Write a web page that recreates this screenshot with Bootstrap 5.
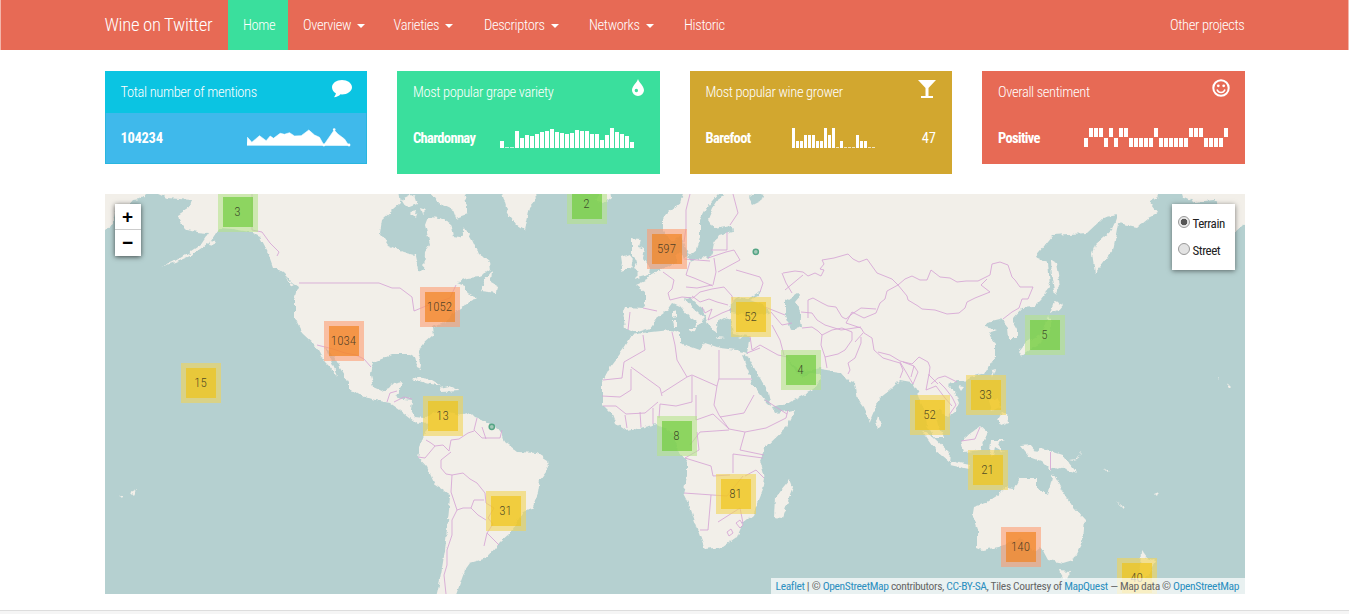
<!DOCTYPE html>
<html lang="en">
<head>
<meta charset="utf-8">
<title>Wine on Twitter</title>
<link href="https://cdn.jsdelivr.net/npm/bootstrap@5.3.0/dist/css/bootstrap.min.css" rel="stylesheet">
<style>
body{font:300 14.5px/21px "Roboto Condensed","Liberation Sans Narrow",Roboto,sans-serif;letter-spacing:-.36px;color:#333;overflow:hidden;background:#fff}
.container,.container>.row{--bs-gutter-x:30px}
.container{max-width:1170px}
.topbar{height:50px;background:#e76a55;border:solid #f3b5aa;border-width:0 1px;--bs-navbar-padding-y:0}
.topbar .navbar-brand{font-size:18.8px;line-height:50px;padding:0;margin:0;width:123.5px;color:#fff;white-space:nowrap}
.topbar .nav-link{line-height:51px;height:50px;padding:0 15px!important;color:#fff!important;white-space:nowrap;font-weight:300}
.topbar .nav-link.active{background:#3adf9d}
.topbar .dropdown-toggle::after{border-top-width:4px;border-left-width:4px;border-right-width:4px;margin-left:6px;vertical-align:2px}
.topbar .nav-link.last{padding-right:0!important}
.tile{color:#fff;border-radius:0;border:0;height:93px}
.tile.tall{height:103px}
.tile .card-header{height:42px;padding:11px 15px 0 16px;background:none;border:0;border-radius:0!important}
.tile .card-body{padding:15px 16px 0 16px;font-weight:bold}
.tile .card-body span{letter-spacing:-.65px;line-height:22px}
.tile svg{display:block}
.c-blue{background:#3fb9eb;box-shadow:inset 0 0 0 1px #29b6df}
.c-blue .card-header{background:#0bc4e2}
.c-green{background:#3adf9d}.c-gold{background:#d2a72f}.c-red{background:#e76a55}
.map{height:400px;background:#b5d0d0;margin-top:20px;overflow:hidden}
.map>svg{display:block}
.cluster{position:absolute;width:40px;height:40px;padding:5px;font-size:13px;line-height:30px;text-align:center;color:rgba(45,45,30,.82);letter-spacing:0}
.cluster b{display:block;font-weight:300}
.sm{background:rgba(181,226,140,.6)}.sm b{background:rgba(110,204,57,.68)}
.md{background:rgba(241,211,87,.6)}.md b{background:rgba(240,194,12,.62)}
.lg{background:rgba(253,156,115,.6)}.lg b{background:rgba(241,128,23,.65)}
.zoomer{position:absolute;left:10px;top:10px;width:26px;background:#fff;box-shadow:0 1px 5px rgba(0,0,0,.65);font:bold 19px/26px "Liberation Sans",sans-serif;letter-spacing:0;color:#000;text-align:center}
.zoomer span{display:block;height:26px}
.layers{position:absolute;right:10px;top:10px;width:63px;height:66px;background:#fff;box-shadow:0 1px 5px rgba(0,0,0,.5);padding:6px;font-size:13px;font-weight:400;letter-spacing:-.45px;color:#222}
.layers label{display:flex;align-items:center;height:27px;gap:3px}
.dotr{width:12px;height:12px;flex:none;border:1px solid #999;border-radius:50%;background:#e3e3e3;margin-top:-4px}
.dotr.on{background:radial-gradient(circle,#555 0 3px,#e8e8e8 3.6px)}
.credit{position:absolute;right:0;bottom:0;width:474px;height:16px;background:rgba(255,255,255,.7);padding-left:5px;font-size:11.5px;font-weight:400;line-height:17px;letter-spacing:-.34px;white-space:nowrap;color:#666}
.credit a{color:#2b8fc0;text-decoration:none}
.foot{height:4px;margin-top:16px;background:#f5f5f5;border-top:1px solid #ddd}
</style>
</head>
<body>
<nav class="navbar navbar-expand topbar">
 <div class="container align-items-stretch">
  <a class="navbar-brand" href="#">Wine on Twitter</a>
  <ul class="navbar-nav me-auto">
   <li style="width:60px"><a class="nav-link active" href="#">Home</a></li>
   <li style="width:90.5px"><a class="nav-link dropdown-toggle" href="#">Overview</a></li>
   <li style="width:90.5px"><a class="nav-link dropdown-toggle" href="#">Varieties</a></li>
   <li style="width:105px"><a class="nav-link dropdown-toggle" href="#">Descriptors</a></li>
   <li style="width:95px"><a class="nav-link dropdown-toggle" href="#">Networks</a></li>
   <li><a class="nav-link" href="#">Historic</a></li>
  </ul>
  <a class="nav-link last" href="#">Other projects</a>
 </div>
</nav>
<main class="container" style="padding-top:21px">
 <div class="row align-items-start" style="height:103px">
  <div class="col-3"><div class="card tile c-blue">
   <div class="card-header d-flex justify-content-between"><span>Total number of mentions</span>
    <svg width="20" height="18" viewBox="0 0 20 18" style="margin-top:-2px"><path fill="#fff" d="M10 0c5.500 0 10 3.200 10 7.200s-4.500 7.200-10 7.200l-1.500-.1C7 16 4.500 17.200 2.200 17.300c-.3-.5 1.500-1.500 1.700-4C1.500 12 0 9.700 0 7.200 0 3.200 4.500 0 10 0z"/></svg></div>
   <div class="card-body d-flex justify-content-between"><span style="letter-spacing:-.3px">104234</span>
    <svg width="104" height="20" viewBox="247.500 128 104 20"><path fill="#fff" stroke="#fff" stroke-width=".6" d="M248 137.300l4.300 5 7.700-6.600 6.700 5 4-4.700 3.300 2.300 6.700-5 4.300 1 5-1.600 5 3.300 6.700-.300 7.600-5.700 5.700 5 5 2.300 4.300 7.700 10.400-15 3.600 4 6.700 5 4.300 6.500-102-.2z"/><circle cx="334.700" cy="129.500" r="1.300" fill="#fff"/><circle cx="324.400" cy="145" r="1.400" fill="#fff"/><circle cx="349.500" cy="145" r="1.400" fill="#fff"/></svg></div>
  </div></div>
  <div class="col-3"><div class="card tile tall c-green">
   <div class="card-header d-flex justify-content-between"><span>Most popular grape variety</span>
    <svg width="12" height="17" viewBox="0 0 12 17" style="margin:-3px 1px 0 0"><path fill="#fff" fill-rule="evenodd" d="M6 0C6.900 3.500 12 7 12 11.200A5.800 5.600 0 0 1 0 11.200C0 7 5.100 3.500 6 0zM4.300 9.800a1.700 1.700 0 1 0 .1 3.400 1.700 1.700 0 0 0-.1-3.400z"/></svg></div>
   <div class="card-body d-flex justify-content-between"><span>Chardonnay</span>
    <svg width="143.500" height="20" fill="#fff" data-bars="7,.7,.7,17,10,13,12,14,16,17,19,16,15,14,15,18,17,17,14,14,8,13,20,16,14,12,6" data-w="4"></svg></div>
  </div></div>
  <div class="col-3"><div class="card tile tall c-gold">
   <div class="card-header d-flex justify-content-between"><span>Most popular wine grower</span>
    <svg width="18" height="18" viewBox="0 0 18 18" style="margin:-2px 1px 0 0"><path fill="#fff" d="M0 0h18l-7.500 8v8H15v2H3v-2h4.500V8z"/></svg></div>
   <div class="card-body d-flex"><span style="width:86.500px">Barefoot</span>
    <svg width="86" height="20" fill="#fff" data-bars="20,7,7,13,13,13,7,7,20,13,20,.7,7,.7,.7,.7,13,7,7,.7,.7" data-w="3"></svg><span class="ms-auto fw-normal" style="letter-spacing:0">47</span></div>
  </div></div>
  <div class="col-3"><div class="card tile c-red">
   <div class="card-header d-flex justify-content-between"><span>Overall sentiment</span>
    <svg width="18" height="18" viewBox="0 0 18 18" style="margin-top:-3px"><g fill="none" stroke="#fff" stroke-width="2"><circle cx="9" cy="9" r="7.700"/><path d="M5 10.500q1.200 3 4 3t4-3" stroke-width="1.600"/></g><g fill="#fff"><circle cx="6.300" cy="6.800" r="1.400"/><circle cx="11.700" cy="6.800" r="1.400"/></g></svg></div>
   <div class="card-body d-flex justify-content-between"><span>Positive</span>
    <svg width="144.500" height="20" fill="#fff" data-tri="duuududuudddddudddddduuuddddu"></svg></div>
  </div></div>
 </div>
 <section class="map position-relative">
 <svg width="1140" height="400" viewBox="105 194 1140 400">
  <defs><filter id="coast" x="0" y="0" width="1" height="1" filterUnits="objectBoundingBox" color-interpolation-filters="sRGB"><feTurbulence type="fractalNoise" baseFrequency=".16" numOctaves="3" seed="4"/><feDisplacementMap in="SourceGraphic" scale="5" xChannelSelector="R" yChannelSelector="G"/></filter></defs>
  <g filter="url(#coast)">
  <rect x="95" y="184" width="1160" height="420" fill="#b5d0d0"/>
  <g fill="#f2efe9">
   <path d="M95 184H150L148 194L140 199L133 200L128 206L115 212L112 226L108 229L95 232z"/>
   <path d="M157 184L158 194L167 198L192 200L190 207L178 215L180 223L187 230L197 232L208 233L200 245L188 253L172 262L160 267L176 262L190 256L203 247L212 240L220 228L232 229L250 232L260 237L267 250L273 267L283 273L292 282L299 287L295 300L295 318L303 334L315 345L318 350L325 362L330 367L337 377L335 370L327 352L325 347L333 355L340 367L349 382L349 388L360 395L375 400L390 403L400 410L410 418L418 424L424 421L429 425L432 420L424 418L415 417L411 410L412 400L396 398L399 392L402 382L393 384L390 388L382 391L373 387L370 375L372 363L384 358L393 354L410 354L415 357L417 367L421 369L422 365L418 353L422 345L433 335L432 327L445 323L457 310L466 304L477 297L465 292L465 285L457 282L467 278L480 277L490 270L489 262L478 253L472 240L465 228L460 238L453 237L450 223L440 218L428 217L425 225L430 245L425 253L424 271L418 270L415 255L403 252L388 245L380 233L382 220L393 210L401 203L398 184z"/>
   <path d="M424 184H462L467 206L467 214L456 218L453 210L438 203L434 197zM402 200l12-6 3 10-10 4zM410 212l7-1-2 6zM420 208l6 2-4 4z"/>
   <path d="M500 184L505 203L508 213L517 225L525 230L527 222L530 207L536 200L534 184z"/>
   <path d="M492 271L485 280L480 291L497 293L498 286L491 282zM462 303l14-6-3 4-10 5zM602 184H610L612 197L604 203L596 202z"/>
   <path d="M411 379q10-5 20 1l10 6-11-2zM440 388l9-2 11 5-18 1z"/>
   <path d="M632 238l8 1-2 8 7 2-2 9 7 10-1 7-16 4 7-7-7-4 4-7-5-5zM621 257l8-3 4 5-2 9-11 4 2-8z"/>
   <path d="M686 184L680 203L668 212L663 218L663 232L672 241L681 236L689 256L684 258L680 252L676 256L677 263L668 266L659 270L650 275L647 280L636 285L645 292L645 305L643 308L625 307L623 312L625 328L633 332L638 332L650 328L657 318L668 310L673 303L680 306L690 317L697 322L694 330L700 323L705 318L690 305L685 299L690 298L703 310L709 326L718 333L717 322L724 318L731 320L733 333L748 336L750 336L747 353L737 350L720 348L705 343L700 350L680 343L680 332L670 330L643 333L632 335L623 350L610 367L602 382L602 405L612 415L615 423L627 431L640 428L657 424L668 430L677 437L675 447L680 452L687 462L687 477L683 493L690 507L697 527L705 549L723 547L737 537L743 523L753 515L763 490L765 478L760 460L765 448L787 427L795 410L775 413L772 407L790 402L812 391L821 378L820 369L840 372L847 380L855 383L858 400L863 407L870 422L875 410L880 398L890 390L900 380L911 382L917 392L920 400L925 410L927 425L935 438L945 438L938 425L935 412L940 410L948 417L955 412L959 402L955 392L948 385L957 381L965 382L970 377L985 373L990 365L995 357L995 343L988 333L997 330L985 327L987 322L1000 319L1004 323L1008 328L1009 338L1017 338L1017 330L1013 323L1013 318L1022 308L1033 307L1040 300L1050 287L1048 262L1035 257L1053 235L1087 233L1103 218L1117 215L1112 230L1095 245L1092 253L1095 273L1100 267L1113 250L1115 240L1118 223L1137 227L1148 218L1158 213L1150 202L1157 198L1162 184z"/>
   <path d="M1180 184L1184 197L1195 202L1214 200L1230 213L1235 232L1243 225L1255 222V184zM1051 260l5 3 4 24-5 8-3-16zM1054 301l9 4-4 5-9 3zM1048 316l4 8-4 14-14 9-12 9-3-5 7-9 14-7z"/>
   <path d="M423 420L428 425L422 440L418 457L427 467L435 485L450 495L449 510L445 550L440 580L434 606H452L465 570L470 563L487 558L500 542L510 533L523 512L532 508L538 493L540 480L549 468L548 460L537 453L518 452L505 442L502 432L487 422L475 418L470 413L463 415L440 410z"/>
   <path d="M973 507L972 513L977 530L977 548L982 550L1000 547L1020 538L1035 552L1041 547L1048 560L1063 563L1073 560L1083 540L1085 520L1073 507L1062 490L1053 473L1048 495L1037 488L1037 478L1020 478L1015 488L1005 487L1000 493L985 503zM1060 570l11 1-4 9-4-1z"/>
   <path d="M1021 446L1030 445L1036 452L1041 448L1063 455L1077 473L1060 467L1050 470L1041 461L1030 457zM961 441L980 426L987 432L981 450L964 452zM921 430L933 437L950 453L949 462L935 450zM950 461l20 4-1 4-18-4zM790 479L793 487L782 518L774 517L775 497zM878 416l4 8-4 4-2-6zM958 386l6 1-3 4zM991 370l4-1-3 8zM1002 412l6 3 1 8-8 3-4-6zM989 402l8-5 3 10-8 4zM990 440l15 0-8 3 7 9-9-5-2 9-4-3zM1141 550l6 8 9 3-6 12-8 9-12 10-5-2 12-14 3-9zM1116 502l9 7-1 1zM1070 459q13-1 12-8-2 11-12 8zM1089 459l4 3M1103 468l7 4-2 1z"/>
   <path d="M673 310l3-1 0 8-3 1zM673 320h4v7h-3zM688 328l8 0-1 4zM717 337l8 1-7 1zM738 337l6-2-3 3zM211 240l6 1-4 5-5-1z"/>
   <path d="M267 246l3 8-3-3zM284 277l11 8-4-1zM1068 302l7-4M1218 378l2 1-1 1zM1228 384l3 3-2 2-2-2zM1154 494l5-2-2 5zM130 493l6-3-3 6zM119 497l5-2-2 3z"/>
  </g>
  <g fill="#b5d0d0">
   <path d="M712 184L718 194L707 207L700 220L700 237L697 250L688 257L690 262L706 256L709 259L712 253L714 243L719 235L733 231L732 226L714 229L708 220L713 208L722 194V184z"/>
   <path d="M750 315L730 313L731 303L737 297L748 299L757 293L760 290L758 296L750 300L765 306L770 313zM785 301L797 293L801 295L795 302L800 312L802 327L791 330L785 313zM742 355L748 357L760 378L768 392L771 406L768 404L754 386zM784 355L790 362L800 370L810 371L820 368L822 374L810 373L804 378L798 373zM748 196l8-3 7 2-2 6-8 4z"/>
  </g>
  </g>
  <g fill="none" stroke="#d6a4d5" stroke-width=".85" stroke-linejoin="round">
   <path d="M252 194V230L262 232L270 243L279 252L277 256M299 283H379L392 288L400 288L412 297L414 311L426 306L450 298L456 285M317 345L333 349L345 353L356 355L364 359L371 367M387 402L390 393L397 391M394 402L404 397L412 399"/>
   <path d="M690 194L686 210L686 228L684 242M733 194L738 213L730 225M727 232L727 250L711 250M708 258L726 252L734 250L740 260L718 272M714 258L716 272L713 285M684 259L710 261M690 262L686 275L694 278L713 286M736 270L760 277L763 283L760 292M663 272L674 280L672 289L668 293L670 300L682 297L693 298L700 292L712 289L724 287L732 296L733 302M686 287L697 288L712 285M692 296L700 302L709 299L717 302L728 305M702 307L705 313L712 309L708 320L722 313L732 309M643 308L657 311M630 312L628 330M765 307L785 315M771 312L782 325L792 323"/>
   <path d="M643 335L645 350L624 362L622 378L603 380M631 367L660 388L662 396M672 332L675 345L677 360L687 377L662 393M687 377L692 375L717 386L719 378L719 350M719 379H752M692 376L692 402L676 406L660 404L659 418M717 386L714 405L719 415L729 429M602 396L620 397L631 390L631 369M603 406H616L626 414L645 413L658 402M640 412L641 427M653 408L653 424M625 415L627 428M696 395L696 420L713 414L729 429L745 432L766 428L786 418L788 410M720 417L744 413L754 395M745 432L740 450L764 455M690 445L700 432L729 430M697 432L699 450L685 458L711 466L713 476L730 475M684 493L727 496L743 476M733 473L733 454L763 458M711 495L708 530L700 530M718 522L740 508L743 523M736 523l4-3 3 5-3 3zM727 532l4-3 2 4-4 3zM765 400L787 414M745 476L756 470L764 478"/>
   <path d="M750 336L752 350L760 345L778 355L788 357M747 353L760 348M772 325L780 340L784 355M783 273L795 271L803 272L808 276L815 273L821 276L824 270L820 269L824 264L822 260L834 258L848 254L853 259L859 262L867 259L872 266L877 273L892 279L898 285L905 279L912 276L920 280L927 280L931 270L940 277L950 278L957 282L966 281L978 281L990 275L992 264L1000 262L1008 265L1012 277L1015 280L1020 287L1033 287L1028 299L1022 299L1019 308L1012 312L1003 319M898 285L907 296L908 300L918 306L922 309L935 310L947 314L959 313L965 308L967 302L975 298L990 292L981 285L987 279M898 285L887 291L885 299L880 303L876 313L864 318L852 312L846 323L861 328L864 333M782 273L786 283L792 293M785 290L803 275M808 318V300L813 298L822 303L828 306L836 307L842 317L846 319L852 314L861 308L876 309M801 312L812 313L817 320L825 325L841 330L861 327M802 328L812 327L818 331L822 335L832 330L842 328L852 332L852 340L845 350L838 354L825 357L821 345L822 335M825 357L827 368M864 333L872 338L874 350L883 358L893 361L900 363L903 370L900 378M878 352L890 355L900 361L912 364L919 357L928 362L930 367L929 375L938 384M861 337L861 343L855 358L848 363L850 370L848 374M863 333L855 342M900 362L906 372L910 379L913 384L918 372L914 366M903 362L914 366L911 377M929 374L926 390L936 386L945 398L952 406M939 382L945 388L952 397L956 405L949 415M931 384L938 378L945 376L957 382"/>
   <path d="M477 418L474 430L482 438L500 438L502 430M482 427L486 439M426 440L431 443L435 446L443 445L449 451L451 440L459 439L468 433L474 431M451 452L441 460L441 468L446 474L452 475L463 473L470 479L477 483L485 493L486 503L494 508L488 518L493 524L487 533L499 545M452 475L451 492L457 510L463 508L471 508L474 500L484 500M471 508L478 515L486 520M457 510L452 520L452 535L447 550L447 565L444 575L446 594M487 533L484 546M418 457L425 458L435 446M961 441L975 439L980 427M1050.500 452V470"/>
  </g>
  <g fill="#a5c9b9" stroke="#55a585" stroke-width="1.500"><circle cx="755.800" cy="251.800" r="2.600"/><circle cx="491.800" cy="426.800" r="2.600"/></g>
 </svg>
 <div id="pins"></div>
 <div class="zoomer"><span style="border-bottom:1px solid #ccc">+</span><span>−</span></div>
 <div class="layers"><label><i class="dotr on"></i>Terrain</label><label><i class="dotr"></i>Street</label></div>
 <div class="credit"><a href="#">Leaflet</a> | © <a href="#">OpenStreetMap</a> contributors, <a href="#">CC-BY-SA</a>, Tiles Courtesy of <a href="#">MapQuest</a> — Map data © <a href="#">OpenStreetMap</a></div>
 </section>
</main>
<footer class="foot"></footer>
<script src="https://cdn.jsdelivr.net/npm/bootstrap@5.3.0/dist/js/bootstrap.bundle.min.js"></script>
<script>
document.querySelectorAll('[data-bars]').forEach(s=>{const w=+s.dataset.w;
 s.innerHTML=s.dataset.bars.split(',').map((h,i)=>`<rect x="${i*(w+1)}" y="${20-h}" width="${w}" height="${h}"/>`).join('')});
document.querySelectorAll('[data-tri]').forEach(s=>{
 s.innerHTML=[...s.dataset.tri].map((c,i)=>`<rect x="${i*5}" y="${c=='u'?0:10}" width="4" height="9"/>`).join('')});
// cluster markers: left, top, size class, count
document.getElementById('pins').innerHTML=[[113,-2,'sm',3],[462,-10,'sm',2],[542,35,'lg',597],[315,93,'lg',1052],[219,127,'lg',1034],[626,103,'md',52],[676,156,'sm',4],[920,121,'sm',5],[76,169,'md',15],[318,202,'md',13],[861,181,'md',33],[805,201,'md',52],[552,222,'sm',8],[863,256,'md',21],[611,280,'md',81],[381,297,'md',31],[896,333,'lg',140],[1012,364,'md',40]]
 .map(([x,y,c,n])=>`<div class="cluster ${c}" style="left:${x}px;top:${y}px"><b>${n}</b></div>`).join('');
</script>
</body>
</html>
